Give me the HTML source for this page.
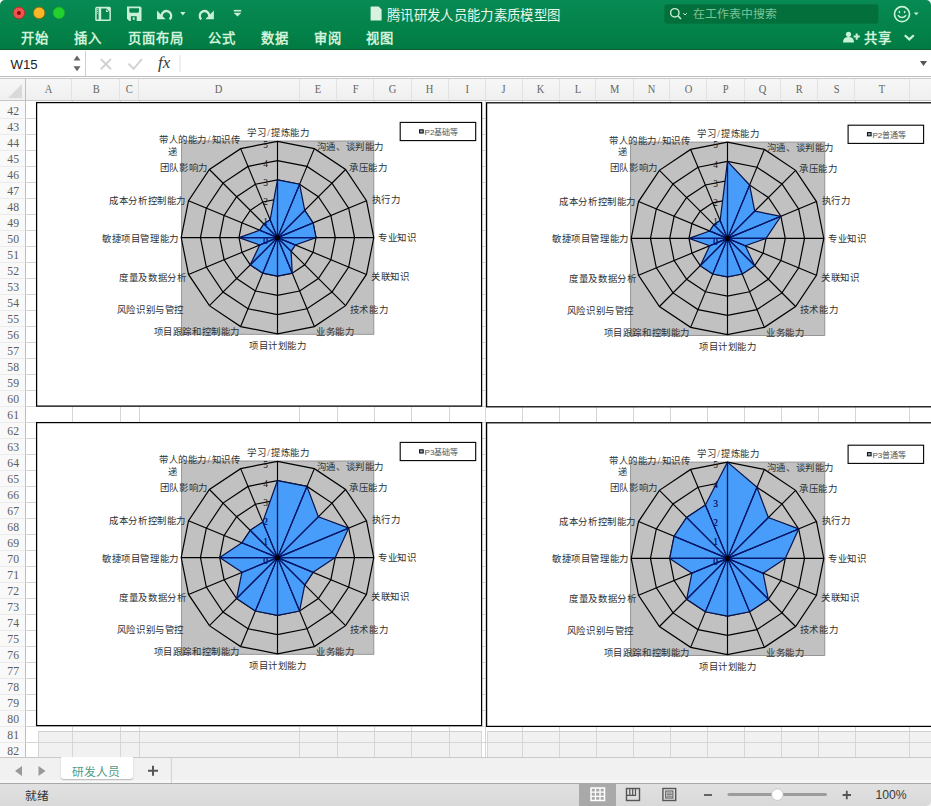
<!DOCTYPE html>
<html lang="zh-CN"><head><meta charset="utf-8"><style>
*{box-sizing:border-box}
body{margin:0;width:931px;height:806px;overflow:hidden;background:#fff;font-family:"Liberation Sans",sans-serif;position:relative}
.abs{position:absolute}
.tab{position:absolute;top:29.6px;color:#cff2da;font-size:13.3px;font-weight:bold;line-height:18px;letter-spacing:1px}
.ch{position:absolute;top:79px;height:21px;line-height:21px;text-align:center;font-family:"Liberation Serif",serif;font-size:12.8px;color:#666;border-right:1px solid #e2e2e2}
.ch span{display:inline-block;transform:scaleX(0.82)}
.rh{position:absolute;left:0;width:25px;height:16px;line-height:16px;text-align:right;padding-right:6px;font-family:"Liberation Serif",serif;font-size:13px;color:#5c5c5c;border-bottom:1px solid #ebebeb}
.rh span{display:inline-block;transform:scaleX(0.9);transform-origin:right}
</style></head><body>
<!-- ribbon -->
<div class="abs" style="left:0;top:0;width:931px;height:50px;background:linear-gradient(#088a54,#038249 60%,#017a42)"></div>
<div class="abs" style="left:0;top:48.5px;width:931px;height:1.5px;background:#0d5f33"></div>
<svg class="abs" style="left:0;top:0" width="931" height="50">
 <circle cx="18.9" cy="12.9" r="5.8" fill="#f0544f" stroke="#c02a26" stroke-width="0.9"/>
 <circle cx="18.9" cy="12.9" r="2" fill="#8a0a0a"/>
 <circle cx="39.1" cy="12.9" r="5.8" fill="#fbb726" stroke="#8f6a10" stroke-width="0.9"/>
 <circle cx="58.9" cy="12.9" r="5.8" fill="#22d12e" stroke="#19a924" stroke-width="0.6"/>
 <g fill="#c9f0d6">
  <rect x="95.2" y="6.8" width="15.7" height="14.2" rx="1.6"/>
  <path d="M96.7 8.3 h1.9 v11.2 h-1.9z" fill="#058550"/>
  <circle cx="97.6" cy="9.6" r="0.55"/><circle cx="97.6" cy="11.4" r="0.55"/><circle cx="97.6" cy="13.3" r="0.55"/>
  <path d="M101.2 8.6 h5.2 l3 3 v7.8 h-8.2z" fill="#058550"/>
  <path d="M106 9.2 l2.8 2.8 h-2.8z"/>
  <path d="M127 6.6 h12.8 a1.7 1.7 0 0 1 1.7 1.7 v12.7 h-12.3 l-2.2 -2.2z"/>
  <path d="M129.3 8.2 h9.7 v3 a1.5 1.5 0 0 1 -1.5 1.5 h-6.7 a1.5 1.5 0 0 1 -1.5 -1.5z" fill="#058550"/>
  <path d="M130.9 16.2 h5.8 v4.8 h-5.8z" fill="#058550"/>
  <path d="M132.8 17.4 h1.9 v2.4 h-1.9z"/>
  <path d="M157 10.4 v8.8 h8.6z"/>
  <path d="M213.9 10.4 v8.8 h-8.6z"/>
  <path d="M180.2 12 h5.3 l-2.65 3.5z"/>
  <rect x="233.8" y="9.9" width="7.4" height="1.6"/>
  <path d="M233.6 12.7 h7.8 l-3.9 3.9z"/>
 </g>
 <g fill="none" stroke="#c9f0d6" stroke-width="2.3">
  <path d="M161.6 16.2 A4.8 4.8 0 1 1 169.6 19.4"/>
  <path d="M209.3 16.2 A4.8 4.8 0 1 0 201.3 19.4"/>
 </g>
 <path d="M370.6 7.5 q0 -1 1 -1 h7 l3 3 v11 h-11z" fill="#d9f2e0"/>
 <rect x="664.3" y="4.2" width="214" height="19.6" rx="3" fill="#03703c"/>
 <circle cx="674.8" cy="12.8" r="4.2" fill="none" stroke="#c9ecd3" stroke-width="1.4"/>
 <line x1="677.8" y1="15.8" x2="681" y2="19" stroke="#c9ecd3" stroke-width="1.6"/>
 <path d="M683.2 13.2 l1.8 1.8 l1.8 -1.8" fill="none" stroke="#c9ecd3" stroke-width="1"/>
 <circle cx="902" cy="14.2" r="7.5" fill="none" stroke="#c8f2d6" stroke-width="1.7"/>
 <ellipse cx="899.4" cy="12" rx="0.8" ry="1.2" fill="#c8f2d6"/><ellipse cx="904.6" cy="12" rx="0.8" ry="1.2" fill="#c8f2d6"/>
 <path d="M897.8 15.2 q4.2 4.6 8.4 0" fill="none" stroke="#c8f2d6" stroke-width="1.4"/>
 <path d="M913.8 12.4 h4.8 l-2.4 2.8z" fill="#c8f2d6"/>
 <circle cx="848.5" cy="34.3" r="2.6" fill="#c8f2d6"/>
 <path d="M843 42.5 q0 -5.4 5.5 -5.4 q5.5 0 5.5 5.4z" fill="#c8f2d6"/>
 <path d="M853.6 36.6 h6.2 M856.7 33.5 v6.2" stroke="#c8f2d6" stroke-width="2"/>
 <path d="M904.8 35.2 l4.5 4.2 l4.5 -4.2" fill="none" stroke="#c8f2d6" stroke-width="2.2"/>
</svg>
<div class="abs" style="left:386.8px;top:6.3px;font-size:13.4px;letter-spacing:0.36px;color:#e6f6ea;line-height:19px">腾讯研发人员能力素质模型图</div>
<div class="abs" style="left:692.9px;top:5px;font-size:11.9px;color:#7cc398;line-height:19px">在工作表中搜索</div>
<div class="tab" style="left:21px">开始</div>
<div class="tab" style="left:74px">插入</div>
<div class="tab" style="left:127.5px">页面布局</div>
<div class="tab" style="left:208px">公式</div>
<div class="tab" style="left:260.5px">数据</div>
<div class="tab" style="left:314px">审阅</div>
<div class="tab" style="left:366px">视图</div>
<div class="tab" style="left:863.5px">共享</div>
<!-- formula bar -->
<div class="abs" style="left:0;top:50px;width:931px;height:26px;background:#fff"></div>
<div class="abs" style="left:10.5px;top:56.3px;font-size:13.2px;color:#222;line-height:18px">W15</div>
<svg class="abs" style="left:0;top:50px" width="931" height="28">
 <path d="M73.5 10.5 h7 l-3.5 -5z M73.5 16.3 h7 l-3.5 5z" fill="#666"/>
 <line x1="85.5" y1="1" x2="85.5" y2="26" stroke="#d0d0d0" stroke-width="1"/>
 <path d="M100.8 9 l10.2 10.2 M111 9 l-10.2 10.2" stroke="#d2d2d2" stroke-width="2"/>
 <path d="M128.4 13.6 l5.2 5.2 l8.3 -9.6" fill="none" stroke="#d2d2d2" stroke-width="2"/>
 <line x1="180" y1="5" x2="180" y2="22" stroke="#e0e0e0" stroke-width="1"/>
 <path d="M920 11 h7 l-3.5 5z" fill="#555"/>
</svg>
<div class="abs" style="left:158px;top:52.5px;font-family:'Liberation Serif',serif;font-style:italic;font-size:17px;color:#3a3a3a;line-height:20px">fx</div>
<div class="abs" style="left:0;top:76px;width:931px;height:1px;background:#bdbdbd"></div>
<div class="abs" style="left:0;top:78px;width:931px;height:1px;background:#c8c8c8"></div>
<!-- headers -->
<div class="abs" style="left:0;top:79px;width:931px;height:22px;background:linear-gradient(#f7f7f7,#efefef)"></div>
<div class="abs" style="left:0;top:100px;width:931px;height:1px;background:#c6c6c6"></div>
<div class="abs" style="left:0;top:101px;width:25.3px;height:656px;background:#f9f9f9"></div>
<div class="abs" style="left:25px;top:79px;width:1px;height:678px;background:#bfbfbf"></div>
<svg class="abs" style="left:0;top:79px" width="26" height="22"><path d="M8 19 L22 5 V19z" fill="#d9d9d9"/></svg>
<div class="ch" style="left:25.3px;width:47.2px"><span>A</span></div><div class="ch" style="left:72.5px;width:47.8px"><span>B</span></div><div class="ch" style="left:120.3px;width:19.2px"><span>C</span></div><div class="ch" style="left:139.5px;width:160.0px"><span>D</span></div><div class="ch" style="left:299.5px;width:37.8px"><span>E</span></div><div class="ch" style="left:337.3px;width:37.2px"><span>F</span></div><div class="ch" style="left:374.5px;width:37.1px"><span>G</span></div><div class="ch" style="left:411.6px;width:37.4px"><span>H</span></div><div class="ch" style="left:449.0px;width:36.5px"><span>I</span></div><div class="ch" style="left:485.5px;width:37.0px"><span>J</span></div><div class="ch" style="left:522.5px;width:37.1px"><span>K</span></div><div class="ch" style="left:559.6px;width:36.9px"><span>L</span></div><div class="ch" style="left:596.5px;width:37.1px"><span>M</span></div><div class="ch" style="left:633.6px;width:36.9px"><span>N</span></div><div class="ch" style="left:670.5px;width:36.9px"><span>O</span></div><div class="ch" style="left:707.4px;width:37.3px"><span>P</span></div><div class="ch" style="left:744.7px;width:36.7px"><span>Q</span></div><div class="ch" style="left:781.4px;width:37.0px"><span>R</span></div><div class="ch" style="left:818.4px;width:37.1px"><span>S</span></div><div class="ch" style="left:855.5px;width:54.1px"><span>T</span></div><div class="ch" style="left:909.6px;width:54.4px"><span>U</span></div>
<div class="rh" style="top:102.8px"><span>42</span></div><div class="rh" style="top:118.8px"><span>43</span></div><div class="rh" style="top:134.8px"><span>44</span></div><div class="rh" style="top:150.8px"><span>45</span></div><div class="rh" style="top:166.8px"><span>46</span></div><div class="rh" style="top:182.8px"><span>47</span></div><div class="rh" style="top:198.8px"><span>48</span></div><div class="rh" style="top:214.8px"><span>49</span></div><div class="rh" style="top:230.8px"><span>50</span></div><div class="rh" style="top:246.8px"><span>51</span></div><div class="rh" style="top:262.8px"><span>52</span></div><div class="rh" style="top:278.8px"><span>53</span></div><div class="rh" style="top:294.8px"><span>54</span></div><div class="rh" style="top:310.8px"><span>55</span></div><div class="rh" style="top:326.8px"><span>56</span></div><div class="rh" style="top:342.8px"><span>57</span></div><div class="rh" style="top:358.8px"><span>58</span></div><div class="rh" style="top:374.8px"><span>59</span></div><div class="rh" style="top:390.8px"><span>60</span></div><div class="rh" style="top:406.8px"><span>61</span></div><div class="rh" style="top:422.8px"><span>62</span></div><div class="rh" style="top:438.8px"><span>63</span></div><div class="rh" style="top:454.8px"><span>64</span></div><div class="rh" style="top:470.8px"><span>65</span></div><div class="rh" style="top:486.8px"><span>66</span></div><div class="rh" style="top:502.8px"><span>67</span></div><div class="rh" style="top:518.8px"><span>68</span></div><div class="rh" style="top:534.8px"><span>69</span></div><div class="rh" style="top:550.8px"><span>70</span></div><div class="rh" style="top:566.8px"><span>71</span></div><div class="rh" style="top:582.8px"><span>72</span></div><div class="rh" style="top:598.8px"><span>73</span></div><div class="rh" style="top:614.8px"><span>74</span></div><div class="rh" style="top:630.8px"><span>75</span></div><div class="rh" style="top:646.8px"><span>76</span></div><div class="rh" style="top:662.8px"><span>77</span></div><div class="rh" style="top:678.8px"><span>78</span></div><div class="rh" style="top:694.8px"><span>79</span></div><div class="rh" style="top:710.8px"><span>80</span></div><div class="rh" style="top:726.8px"><span>81</span></div><div class="rh" style="top:742.8px"><span>82</span></div>
<div class="abs" style="left:38px;top:731px;width:443.6px;height:27px;background:#f1f1f1;border-top:1px solid #cfcfcf;border-left:1px solid #d6d6d6;border-right:1px solid #d6d6d6"></div>
<div class="abs" style="left:487px;top:731px;width:444px;height:27px;background:#f1f1f1;border-top:1px solid #cfcfcf;border-left:1px solid #d6d6d6"></div>
<div style="position:absolute;left:72.0px;top:101px;width:1px;height:656px;background:#d6d6d6"></div><div style="position:absolute;left:119.8px;top:101px;width:1px;height:656px;background:#d6d6d6"></div><div style="position:absolute;left:139.0px;top:101px;width:1px;height:656px;background:#d6d6d6"></div><div style="position:absolute;left:299.0px;top:101px;width:1px;height:656px;background:#d6d6d6"></div><div style="position:absolute;left:336.8px;top:101px;width:1px;height:656px;background:#d6d6d6"></div><div style="position:absolute;left:374.0px;top:101px;width:1px;height:656px;background:#d6d6d6"></div><div style="position:absolute;left:411.1px;top:101px;width:1px;height:656px;background:#d6d6d6"></div><div style="position:absolute;left:448.5px;top:101px;width:1px;height:656px;background:#d6d6d6"></div><div style="position:absolute;left:485.0px;top:101px;width:1px;height:656px;background:#d6d6d6"></div><div style="position:absolute;left:522.0px;top:101px;width:1px;height:656px;background:#d6d6d6"></div><div style="position:absolute;left:559.1px;top:101px;width:1px;height:656px;background:#d6d6d6"></div><div style="position:absolute;left:596.0px;top:101px;width:1px;height:656px;background:#d6d6d6"></div><div style="position:absolute;left:633.1px;top:101px;width:1px;height:656px;background:#d6d6d6"></div><div style="position:absolute;left:670.0px;top:101px;width:1px;height:656px;background:#d6d6d6"></div><div style="position:absolute;left:706.9px;top:101px;width:1px;height:656px;background:#d6d6d6"></div><div style="position:absolute;left:744.2px;top:101px;width:1px;height:656px;background:#d6d6d6"></div><div style="position:absolute;left:780.9px;top:101px;width:1px;height:656px;background:#d6d6d6"></div><div style="position:absolute;left:817.9px;top:101px;width:1px;height:656px;background:#d6d6d6"></div><div style="position:absolute;left:855.0px;top:101px;width:1px;height:656px;background:#d6d6d6"></div><div style="position:absolute;left:909.1px;top:101px;width:1px;height:656px;background:#d6d6d6"></div><div style="position:absolute;left:25px;top:117.5px;width:906px;height:1px;background:#d6d6d6"></div><div style="position:absolute;left:25px;top:133.5px;width:906px;height:1px;background:#d6d6d6"></div><div style="position:absolute;left:25px;top:149.5px;width:906px;height:1px;background:#d6d6d6"></div><div style="position:absolute;left:25px;top:165.5px;width:906px;height:1px;background:#d6d6d6"></div><div style="position:absolute;left:25px;top:181.5px;width:906px;height:1px;background:#d6d6d6"></div><div style="position:absolute;left:25px;top:197.5px;width:906px;height:1px;background:#d6d6d6"></div><div style="position:absolute;left:25px;top:213.5px;width:906px;height:1px;background:#d6d6d6"></div><div style="position:absolute;left:25px;top:229.5px;width:906px;height:1px;background:#d6d6d6"></div><div style="position:absolute;left:25px;top:245.5px;width:906px;height:1px;background:#d6d6d6"></div><div style="position:absolute;left:25px;top:261.5px;width:906px;height:1px;background:#d6d6d6"></div><div style="position:absolute;left:25px;top:277.5px;width:906px;height:1px;background:#d6d6d6"></div><div style="position:absolute;left:25px;top:293.5px;width:906px;height:1px;background:#d6d6d6"></div><div style="position:absolute;left:25px;top:309.5px;width:906px;height:1px;background:#d6d6d6"></div><div style="position:absolute;left:25px;top:325.5px;width:906px;height:1px;background:#d6d6d6"></div><div style="position:absolute;left:25px;top:341.5px;width:906px;height:1px;background:#d6d6d6"></div><div style="position:absolute;left:25px;top:357.5px;width:906px;height:1px;background:#d6d6d6"></div><div style="position:absolute;left:25px;top:373.5px;width:906px;height:1px;background:#d6d6d6"></div><div style="position:absolute;left:25px;top:389.5px;width:906px;height:1px;background:#d6d6d6"></div><div style="position:absolute;left:25px;top:405.5px;width:906px;height:1px;background:#d6d6d6"></div><div style="position:absolute;left:25px;top:421.5px;width:906px;height:1px;background:#d6d6d6"></div><div style="position:absolute;left:25px;top:437.5px;width:906px;height:1px;background:#d6d6d6"></div><div style="position:absolute;left:25px;top:453.5px;width:906px;height:1px;background:#d6d6d6"></div><div style="position:absolute;left:25px;top:469.5px;width:906px;height:1px;background:#d6d6d6"></div><div style="position:absolute;left:25px;top:485.5px;width:906px;height:1px;background:#d6d6d6"></div><div style="position:absolute;left:25px;top:501.5px;width:906px;height:1px;background:#d6d6d6"></div><div style="position:absolute;left:25px;top:517.5px;width:906px;height:1px;background:#d6d6d6"></div><div style="position:absolute;left:25px;top:533.5px;width:906px;height:1px;background:#d6d6d6"></div><div style="position:absolute;left:25px;top:549.5px;width:906px;height:1px;background:#d6d6d6"></div><div style="position:absolute;left:25px;top:565.5px;width:906px;height:1px;background:#d6d6d6"></div><div style="position:absolute;left:25px;top:581.5px;width:906px;height:1px;background:#d6d6d6"></div><div style="position:absolute;left:25px;top:597.5px;width:906px;height:1px;background:#d6d6d6"></div><div style="position:absolute;left:25px;top:613.5px;width:906px;height:1px;background:#d6d6d6"></div><div style="position:absolute;left:25px;top:629.5px;width:906px;height:1px;background:#d6d6d6"></div><div style="position:absolute;left:25px;top:645.5px;width:906px;height:1px;background:#d6d6d6"></div><div style="position:absolute;left:25px;top:661.5px;width:906px;height:1px;background:#d6d6d6"></div><div style="position:absolute;left:25px;top:677.5px;width:906px;height:1px;background:#d6d6d6"></div><div style="position:absolute;left:25px;top:693.5px;width:906px;height:1px;background:#d6d6d6"></div><div style="position:absolute;left:25px;top:709.5px;width:906px;height:1px;background:#d6d6d6"></div><div style="position:absolute;left:25px;top:725.5px;width:906px;height:1px;background:#d6d6d6"></div><div style="position:absolute;left:25px;top:741.5px;width:906px;height:1px;background:#d6d6d6"></div><div style="position:absolute;left:25px;top:757.5px;width:906px;height:1px;background:#d6d6d6"></div>
<svg class="abs" style="left:0;top:0" width="931" height="757">
<rect x="36.6" y="102.6" width="445" height="303.5" fill="#fff" stroke="#000" stroke-width="1.25"/><rect x="486.6" y="102.8" width="460" height="304" fill="#fff" stroke="#000" stroke-width="1.25"/><rect x="36.6" y="422.6" width="445" height="303" fill="#fff" stroke="#000" stroke-width="1.25"/><rect x="486.6" y="422.8" width="460" height="303.6" fill="#fff" stroke="#000" stroke-width="1.25"/><rect x="181.60" y="141.00" width="192.20" height="193.30" fill="#c1c1c1" stroke="#8e8e8e" stroke-width="0.9"/>
<polygon points="277.50,218.34 284.87,219.81 291.12,223.98 295.29,230.23 296.76,237.60 295.29,244.97 291.12,251.22 284.87,255.39 277.50,256.86 270.13,255.39 263.88,251.22 259.71,244.97 258.24,237.60 259.71,230.23 263.88,223.98 270.13,219.81" fill="none" stroke="#000" stroke-width="1.2"/>
<polygon points="277.50,199.08 292.24,202.01 304.74,210.36 313.09,222.86 316.02,237.60 313.09,252.34 304.74,264.84 292.24,273.19 277.50,276.12 262.76,273.19 250.26,264.84 241.91,252.34 238.98,237.60 241.91,222.86 250.26,210.36 262.76,202.01" fill="none" stroke="#000" stroke-width="1.2"/>
<polygon points="277.50,179.82 299.61,184.22 318.36,196.74 330.88,215.49 335.28,237.60 330.88,259.71 318.36,278.46 299.61,290.98 277.50,295.38 255.39,290.98 236.64,278.46 224.12,259.71 219.72,237.60 224.12,215.49 236.64,196.74 255.39,184.22" fill="none" stroke="#000" stroke-width="1.2"/>
<polygon points="277.50,160.56 306.98,166.42 331.98,183.12 348.68,208.12 354.54,237.60 348.68,267.08 331.98,292.08 306.98,308.78 277.50,314.64 248.02,308.78 223.02,292.08 206.32,267.08 200.46,237.60 206.32,208.12 223.02,183.12 248.02,166.42" fill="none" stroke="#000" stroke-width="1.2"/>
<polygon points="277.50,141.30 314.35,148.63 345.59,169.51 366.47,200.75 373.80,237.60 366.47,274.45 345.59,305.69 314.35,326.57 277.50,333.90 240.65,326.57 209.41,305.69 188.53,274.45 181.20,237.60 188.53,200.75 209.41,169.51 240.65,148.63" fill="none" stroke="#000" stroke-width="1.2"/>
<clipPath id="cp277_237"><polygon points="277.50,179.82 299.61,184.22 304.74,210.36 313.09,222.86 316.02,237.60 295.29,244.97 291.12,251.22 292.24,273.19 277.50,276.12 262.76,273.19 250.26,264.84 259.71,244.97 238.98,237.60 259.71,230.23 263.88,223.98 270.13,219.81"/></clipPath>
<polygon points="277.50,179.82 299.61,184.22 304.74,210.36 313.09,222.86 316.02,237.60 295.29,244.97 291.12,251.22 292.24,273.19 277.50,276.12 262.76,273.19 250.26,264.84 259.71,244.97 238.98,237.60 259.71,230.23 263.88,223.98 270.13,219.81" fill="#489dfb"/>
<g stroke="#000" stroke-width="1.15"><line x1="277.50" y1="237.60" x2="277.50" y2="141.30"/><line x1="277.50" y1="237.60" x2="314.35" y2="148.63"/><line x1="277.50" y1="237.60" x2="345.59" y2="169.51"/><line x1="277.50" y1="237.60" x2="366.47" y2="200.75"/><line x1="277.50" y1="237.60" x2="373.80" y2="237.60"/><line x1="277.50" y1="237.60" x2="366.47" y2="274.45"/><line x1="277.50" y1="237.60" x2="345.59" y2="305.69"/><line x1="277.50" y1="237.60" x2="314.35" y2="326.57"/><line x1="277.50" y1="237.60" x2="277.50" y2="333.90"/><line x1="277.50" y1="237.60" x2="240.65" y2="326.57"/><line x1="277.50" y1="237.60" x2="209.41" y2="305.69"/><line x1="277.50" y1="237.60" x2="188.53" y2="274.45"/><line x1="277.50" y1="237.60" x2="181.20" y2="237.60"/><line x1="277.50" y1="237.60" x2="188.53" y2="200.75"/><line x1="277.50" y1="237.60" x2="209.41" y2="169.51"/><line x1="277.50" y1="237.60" x2="240.65" y2="148.63"/></g>
<g font-size="9.4" fill="#111" text-anchor="middle" font-family="Liberation Serif"><text x="265.50" y="243.80">0</text><text x="265.50" y="224.54">1</text><text x="265.50" y="205.28">2</text><text x="265.50" y="186.02">3</text><text x="265.50" y="166.76">4</text><text x="265.50" y="147.50">5</text></g>
<g clip-path="url(#cp277_237)"><g stroke="#06177a" stroke-width="1.15"><line x1="277.50" y1="237.60" x2="277.50" y2="141.30"/><line x1="277.50" y1="237.60" x2="314.35" y2="148.63"/><line x1="277.50" y1="237.60" x2="345.59" y2="169.51"/><line x1="277.50" y1="237.60" x2="366.47" y2="200.75"/><line x1="277.50" y1="237.60" x2="373.80" y2="237.60"/><line x1="277.50" y1="237.60" x2="366.47" y2="274.45"/><line x1="277.50" y1="237.60" x2="345.59" y2="305.69"/><line x1="277.50" y1="237.60" x2="314.35" y2="326.57"/><line x1="277.50" y1="237.60" x2="277.50" y2="333.90"/><line x1="277.50" y1="237.60" x2="240.65" y2="326.57"/><line x1="277.50" y1="237.60" x2="209.41" y2="305.69"/><line x1="277.50" y1="237.60" x2="188.53" y2="274.45"/><line x1="277.50" y1="237.60" x2="181.20" y2="237.60"/><line x1="277.50" y1="237.60" x2="188.53" y2="200.75"/><line x1="277.50" y1="237.60" x2="209.41" y2="169.51"/><line x1="277.50" y1="237.60" x2="240.65" y2="148.63"/></g><g font-size="9.4" fill="#0a1f8a" text-anchor="middle" font-family="Liberation Serif"><text x="265.50" y="243.80">0</text><text x="265.50" y="224.54">1</text><text x="265.50" y="205.28">2</text><text x="265.50" y="186.02">3</text><text x="265.50" y="166.76">4</text><text x="265.50" y="147.50">5</text></g></g>
<polygon points="277.50,179.82 299.61,184.22 304.74,210.36 313.09,222.86 316.02,237.60 295.29,244.97 291.12,251.22 292.24,273.19 277.50,276.12 262.76,273.19 250.26,264.84 259.71,244.97 238.98,237.60 259.71,230.23 263.88,223.98 270.13,219.81" fill="none" stroke="#08124a" stroke-width="1.2" stroke-linejoin="round"/>
<circle cx="277.50" cy="237.60" r="2.6" fill="#000"/><g font-size="9.4" letter-spacing="0.6" fill="#303030" font-family="Liberation Serif"><text x="247.30" y="135.80">学习<tspan dx="0.7">/</tspan><tspan dx="0.7">提炼能力</tspan></text>
<text x="316.80" y="149.80">沟通、谈判能力</text>
<text x="349.20" y="171.00">承压能力</text>
<text x="371.90" y="203.45">执行力</text>
<text x="378.00" y="241.35">专业知识</text>
<text x="371.20" y="280.40">关联知识</text>
<text x="349.80" y="312.50">技术能力</text>
<text x="316.00" y="334.70">业务能力</text>
<text x="249.00" y="348.75">项目计划能力</text>
<text x="153.60" y="334.75">项目跟踪和控制能力</text>
<text x="116.80" y="312.95">风险识别与管控</text>
<text x="119.20" y="280.70">度量及数据分析</text>
<text x="102.00" y="241.50">敏捷项目管理能力</text>
<text x="109.20" y="203.95">成本分析控制能力</text>
<text x="159.80" y="170.60">团队影响力</text>
<text x="159.10" y="142.80">带人的能力<tspan dx="0.7">/</tspan><tspan dx="0.7">知识传</tspan></text>
<text x="168.30" y="154.60">递</text></g><rect x="400.2" y="122.4" width="75.5" height="18.2" fill="#fff" stroke="#000" stroke-width="1.1"/><rect x="419.59999999999997" y="129.8" width="3.6" height="3.2" fill="#8fa4c8" stroke="#111" stroke-width="1.1"/><text x="424.5" y="135.0" font-size="8.1" fill="#555" font-family="Liberation Sans">P2基础等</text><rect x="630.60" y="142.10" width="194.20" height="193.40" fill="#c1c1c1" stroke="#8e8e8e" stroke-width="0.9"/>
<polygon points="727.50,219.14 734.87,220.61 741.12,224.78 745.29,231.03 746.76,238.40 745.29,245.77 741.12,252.02 734.87,256.19 727.50,257.66 720.13,256.19 713.88,252.02 709.71,245.77 708.24,238.40 709.71,231.03 713.88,224.78 720.13,220.61" fill="none" stroke="#000" stroke-width="1.2"/>
<polygon points="727.50,199.88 742.24,202.81 754.74,211.16 763.09,223.66 766.02,238.40 763.09,253.14 754.74,265.64 742.24,273.99 727.50,276.92 712.76,273.99 700.26,265.64 691.91,253.14 688.98,238.40 691.91,223.66 700.26,211.16 712.76,202.81" fill="none" stroke="#000" stroke-width="1.2"/>
<polygon points="727.50,180.62 749.61,185.02 768.36,197.54 780.88,216.29 785.28,238.40 780.88,260.51 768.36,279.26 749.61,291.78 727.50,296.18 705.39,291.78 686.64,279.26 674.12,260.51 669.72,238.40 674.12,216.29 686.64,197.54 705.39,185.02" fill="none" stroke="#000" stroke-width="1.2"/>
<polygon points="727.50,161.36 756.98,167.22 781.98,183.92 798.68,208.92 804.54,238.40 798.68,267.88 781.98,292.88 756.98,309.58 727.50,315.44 698.02,309.58 673.02,292.88 656.32,267.88 650.46,238.40 656.32,208.92 673.02,183.92 698.02,167.22" fill="none" stroke="#000" stroke-width="1.2"/>
<polygon points="727.50,142.10 764.35,149.43 795.59,170.31 816.47,201.55 823.80,238.40 816.47,275.25 795.59,306.49 764.35,327.37 727.50,334.70 690.65,327.37 659.41,306.49 638.53,275.25 631.20,238.40 638.53,201.55 659.41,170.31 690.65,149.43" fill="none" stroke="#000" stroke-width="1.2"/>
<clipPath id="cp727_238"><polygon points="727.50,161.36 749.61,185.02 754.74,211.16 780.88,216.29 766.02,238.40 745.29,245.77 754.74,265.64 742.24,273.99 727.50,276.92 712.76,273.99 700.26,265.64 709.71,245.77 688.98,238.40 709.71,231.03 713.88,224.78 720.13,220.61"/></clipPath>
<polygon points="727.50,161.36 749.61,185.02 754.74,211.16 780.88,216.29 766.02,238.40 745.29,245.77 754.74,265.64 742.24,273.99 727.50,276.92 712.76,273.99 700.26,265.64 709.71,245.77 688.98,238.40 709.71,231.03 713.88,224.78 720.13,220.61" fill="#489dfb"/>
<g stroke="#000" stroke-width="1.15"><line x1="727.50" y1="238.40" x2="727.50" y2="142.10"/><line x1="727.50" y1="238.40" x2="764.35" y2="149.43"/><line x1="727.50" y1="238.40" x2="795.59" y2="170.31"/><line x1="727.50" y1="238.40" x2="816.47" y2="201.55"/><line x1="727.50" y1="238.40" x2="823.80" y2="238.40"/><line x1="727.50" y1="238.40" x2="816.47" y2="275.25"/><line x1="727.50" y1="238.40" x2="795.59" y2="306.49"/><line x1="727.50" y1="238.40" x2="764.35" y2="327.37"/><line x1="727.50" y1="238.40" x2="727.50" y2="334.70"/><line x1="727.50" y1="238.40" x2="690.65" y2="327.37"/><line x1="727.50" y1="238.40" x2="659.41" y2="306.49"/><line x1="727.50" y1="238.40" x2="638.53" y2="275.25"/><line x1="727.50" y1="238.40" x2="631.20" y2="238.40"/><line x1="727.50" y1="238.40" x2="638.53" y2="201.55"/><line x1="727.50" y1="238.40" x2="659.41" y2="170.31"/><line x1="727.50" y1="238.40" x2="690.65" y2="149.43"/></g>
<g font-size="9.4" fill="#111" text-anchor="middle" font-family="Liberation Serif"><text x="715.50" y="244.60">0</text><text x="715.50" y="225.34">1</text><text x="715.50" y="206.08">2</text><text x="715.50" y="186.82">3</text><text x="715.50" y="167.56">4</text><text x="715.50" y="148.30">5</text></g>
<g clip-path="url(#cp727_238)"><g stroke="#06177a" stroke-width="1.15"><line x1="727.50" y1="238.40" x2="727.50" y2="142.10"/><line x1="727.50" y1="238.40" x2="764.35" y2="149.43"/><line x1="727.50" y1="238.40" x2="795.59" y2="170.31"/><line x1="727.50" y1="238.40" x2="816.47" y2="201.55"/><line x1="727.50" y1="238.40" x2="823.80" y2="238.40"/><line x1="727.50" y1="238.40" x2="816.47" y2="275.25"/><line x1="727.50" y1="238.40" x2="795.59" y2="306.49"/><line x1="727.50" y1="238.40" x2="764.35" y2="327.37"/><line x1="727.50" y1="238.40" x2="727.50" y2="334.70"/><line x1="727.50" y1="238.40" x2="690.65" y2="327.37"/><line x1="727.50" y1="238.40" x2="659.41" y2="306.49"/><line x1="727.50" y1="238.40" x2="638.53" y2="275.25"/><line x1="727.50" y1="238.40" x2="631.20" y2="238.40"/><line x1="727.50" y1="238.40" x2="638.53" y2="201.55"/><line x1="727.50" y1="238.40" x2="659.41" y2="170.31"/><line x1="727.50" y1="238.40" x2="690.65" y2="149.43"/></g><g font-size="9.4" fill="#0a1f8a" text-anchor="middle" font-family="Liberation Serif"><text x="715.50" y="244.60">0</text><text x="715.50" y="225.34">1</text><text x="715.50" y="206.08">2</text><text x="715.50" y="186.82">3</text><text x="715.50" y="167.56">4</text><text x="715.50" y="148.30">5</text></g></g>
<polygon points="727.50,161.36 749.61,185.02 754.74,211.16 780.88,216.29 766.02,238.40 745.29,245.77 754.74,265.64 742.24,273.99 727.50,276.92 712.76,273.99 700.26,265.64 709.71,245.77 688.98,238.40 709.71,231.03 713.88,224.78 720.13,220.61" fill="none" stroke="#08124a" stroke-width="1.2" stroke-linejoin="round"/>
<circle cx="727.50" cy="238.40" r="2.6" fill="#000"/><g font-size="9.4" letter-spacing="0.6" fill="#303030" font-family="Liberation Serif"><text x="697.30" y="136.60">学习<tspan dx="0.7">/</tspan><tspan dx="0.7">提炼能力</tspan></text>
<text x="766.80" y="150.60">沟通、谈判能力</text>
<text x="799.20" y="171.80">承压能力</text>
<text x="821.90" y="204.25">执行力</text>
<text x="828.00" y="242.15">专业知识</text>
<text x="821.20" y="281.20">关联知识</text>
<text x="799.80" y="313.30">技术能力</text>
<text x="766.00" y="335.50">业务能力</text>
<text x="699.00" y="349.55">项目计划能力</text>
<text x="603.60" y="335.55">项目跟踪和控制能力</text>
<text x="566.80" y="313.75">风险识别与管控</text>
<text x="569.20" y="281.50">度量及数据分析</text>
<text x="552.00" y="242.30">敏捷项目管理能力</text>
<text x="559.20" y="204.75">成本分析控制能力</text>
<text x="609.80" y="171.40">团队影响力</text>
<text x="609.10" y="143.60">带人的能力<tspan dx="0.7">/</tspan><tspan dx="0.7">知识传</tspan></text>
<text x="618.30" y="155.40">递</text></g><rect x="848.1" y="125.2" width="75.5" height="18.2" fill="#fff" stroke="#000" stroke-width="1.1"/><rect x="867.5" y="132.6" width="3.6" height="3.2" fill="#8fa4c8" stroke="#111" stroke-width="1.1"/><text x="872.4" y="137.8" font-size="8.1" fill="#555" font-family="Liberation Sans">P2普通等</text><rect x="181.60" y="461.00" width="192.20" height="193.30" fill="#c1c1c1" stroke="#8e8e8e" stroke-width="0.9"/>
<polygon points="277.50,538.34 284.87,539.81 291.12,543.98 295.29,550.23 296.76,557.60 295.29,564.97 291.12,571.22 284.87,575.39 277.50,576.86 270.13,575.39 263.88,571.22 259.71,564.97 258.24,557.60 259.71,550.23 263.88,543.98 270.13,539.81" fill="none" stroke="#000" stroke-width="1.2"/>
<polygon points="277.50,519.08 292.24,522.01 304.74,530.36 313.09,542.86 316.02,557.60 313.09,572.34 304.74,584.84 292.24,593.19 277.50,596.12 262.76,593.19 250.26,584.84 241.91,572.34 238.98,557.60 241.91,542.86 250.26,530.36 262.76,522.01" fill="none" stroke="#000" stroke-width="1.2"/>
<polygon points="277.50,499.82 299.61,504.22 318.36,516.74 330.88,535.49 335.28,557.60 330.88,579.71 318.36,598.46 299.61,610.98 277.50,615.38 255.39,610.98 236.64,598.46 224.12,579.71 219.72,557.60 224.12,535.49 236.64,516.74 255.39,504.22" fill="none" stroke="#000" stroke-width="1.2"/>
<polygon points="277.50,480.56 306.98,486.42 331.98,503.12 348.68,528.12 354.54,557.60 348.68,587.08 331.98,612.08 306.98,628.78 277.50,634.64 248.02,628.78 223.02,612.08 206.32,587.08 200.46,557.60 206.32,528.12 223.02,503.12 248.02,486.42" fill="none" stroke="#000" stroke-width="1.2"/>
<polygon points="277.50,461.30 314.35,468.63 345.59,489.51 366.47,520.75 373.80,557.60 366.47,594.45 345.59,625.69 314.35,646.57 277.50,653.90 240.65,646.57 209.41,625.69 188.53,594.45 181.20,557.60 188.53,520.75 209.41,489.51 240.65,468.63" fill="none" stroke="#000" stroke-width="1.2"/>
<clipPath id="cp277_557"><polygon points="277.50,480.56 306.98,486.42 318.36,516.74 348.68,528.12 335.28,557.60 313.09,572.34 304.74,584.84 299.61,610.98 277.50,615.38 255.39,610.98 236.64,598.46 241.91,572.34 219.72,557.60 241.91,542.86 250.26,530.36 262.76,522.01"/></clipPath>
<polygon points="277.50,480.56 306.98,486.42 318.36,516.74 348.68,528.12 335.28,557.60 313.09,572.34 304.74,584.84 299.61,610.98 277.50,615.38 255.39,610.98 236.64,598.46 241.91,572.34 219.72,557.60 241.91,542.86 250.26,530.36 262.76,522.01" fill="#489dfb"/>
<g stroke="#000" stroke-width="1.15"><line x1="277.50" y1="557.60" x2="277.50" y2="461.30"/><line x1="277.50" y1="557.60" x2="314.35" y2="468.63"/><line x1="277.50" y1="557.60" x2="345.59" y2="489.51"/><line x1="277.50" y1="557.60" x2="366.47" y2="520.75"/><line x1="277.50" y1="557.60" x2="373.80" y2="557.60"/><line x1="277.50" y1="557.60" x2="366.47" y2="594.45"/><line x1="277.50" y1="557.60" x2="345.59" y2="625.69"/><line x1="277.50" y1="557.60" x2="314.35" y2="646.57"/><line x1="277.50" y1="557.60" x2="277.50" y2="653.90"/><line x1="277.50" y1="557.60" x2="240.65" y2="646.57"/><line x1="277.50" y1="557.60" x2="209.41" y2="625.69"/><line x1="277.50" y1="557.60" x2="188.53" y2="594.45"/><line x1="277.50" y1="557.60" x2="181.20" y2="557.60"/><line x1="277.50" y1="557.60" x2="188.53" y2="520.75"/><line x1="277.50" y1="557.60" x2="209.41" y2="489.51"/><line x1="277.50" y1="557.60" x2="240.65" y2="468.63"/></g>
<g font-size="9.4" fill="#111" text-anchor="middle" font-family="Liberation Serif"><text x="265.50" y="563.80">0</text><text x="265.50" y="544.54">1</text><text x="265.50" y="525.28">2</text><text x="265.50" y="506.02">3</text><text x="265.50" y="486.76">4</text><text x="265.50" y="467.50">5</text></g>
<g clip-path="url(#cp277_557)"><g stroke="#06177a" stroke-width="1.15"><line x1="277.50" y1="557.60" x2="277.50" y2="461.30"/><line x1="277.50" y1="557.60" x2="314.35" y2="468.63"/><line x1="277.50" y1="557.60" x2="345.59" y2="489.51"/><line x1="277.50" y1="557.60" x2="366.47" y2="520.75"/><line x1="277.50" y1="557.60" x2="373.80" y2="557.60"/><line x1="277.50" y1="557.60" x2="366.47" y2="594.45"/><line x1="277.50" y1="557.60" x2="345.59" y2="625.69"/><line x1="277.50" y1="557.60" x2="314.35" y2="646.57"/><line x1="277.50" y1="557.60" x2="277.50" y2="653.90"/><line x1="277.50" y1="557.60" x2="240.65" y2="646.57"/><line x1="277.50" y1="557.60" x2="209.41" y2="625.69"/><line x1="277.50" y1="557.60" x2="188.53" y2="594.45"/><line x1="277.50" y1="557.60" x2="181.20" y2="557.60"/><line x1="277.50" y1="557.60" x2="188.53" y2="520.75"/><line x1="277.50" y1="557.60" x2="209.41" y2="489.51"/><line x1="277.50" y1="557.60" x2="240.65" y2="468.63"/></g><g font-size="9.4" fill="#0a1f8a" text-anchor="middle" font-family="Liberation Serif"><text x="265.50" y="563.80">0</text><text x="265.50" y="544.54">1</text><text x="265.50" y="525.28">2</text><text x="265.50" y="506.02">3</text><text x="265.50" y="486.76">4</text><text x="265.50" y="467.50">5</text></g></g>
<polygon points="277.50,480.56 306.98,486.42 318.36,516.74 348.68,528.12 335.28,557.60 313.09,572.34 304.74,584.84 299.61,610.98 277.50,615.38 255.39,610.98 236.64,598.46 241.91,572.34 219.72,557.60 241.91,542.86 250.26,530.36 262.76,522.01" fill="none" stroke="#08124a" stroke-width="1.2" stroke-linejoin="round"/>
<circle cx="277.50" cy="557.60" r="2.6" fill="#000"/><g font-size="9.4" letter-spacing="0.6" fill="#303030" font-family="Liberation Serif"><text x="247.30" y="455.80">学习<tspan dx="0.7">/</tspan><tspan dx="0.7">提炼能力</tspan></text>
<text x="316.80" y="469.80">沟通、谈判能力</text>
<text x="349.20" y="491.00">承压能力</text>
<text x="371.90" y="523.45">执行力</text>
<text x="378.00" y="561.35">专业知识</text>
<text x="371.20" y="600.40">关联知识</text>
<text x="349.80" y="632.50">技术能力</text>
<text x="316.00" y="654.70">业务能力</text>
<text x="249.00" y="668.75">项目计划能力</text>
<text x="153.60" y="654.75">项目跟踪和控制能力</text>
<text x="116.80" y="632.95">风险识别与管控</text>
<text x="119.20" y="600.70">度量及数据分析</text>
<text x="102.00" y="561.50">敏捷项目管理能力</text>
<text x="109.20" y="523.95">成本分析控制能力</text>
<text x="159.80" y="490.60">团队影响力</text>
<text x="159.10" y="462.80">带人的能力<tspan dx="0.7">/</tspan><tspan dx="0.7">知识传</tspan></text>
<text x="168.30" y="474.60">递</text></g><rect x="400.2" y="442.4" width="75.5" height="18.2" fill="#fff" stroke="#000" stroke-width="1.1"/><rect x="419.59999999999997" y="449.79999999999995" width="3.6" height="3.2" fill="#8fa4c8" stroke="#111" stroke-width="1.1"/><text x="424.5" y="455.0" font-size="8.1" fill="#555" font-family="Liberation Sans">P3基础等</text><rect x="630.60" y="462.10" width="194.20" height="193.40" fill="#c1c1c1" stroke="#8e8e8e" stroke-width="0.9"/>
<polygon points="727.50,539.14 734.87,540.61 741.12,544.78 745.29,551.03 746.76,558.40 745.29,565.77 741.12,572.02 734.87,576.19 727.50,577.66 720.13,576.19 713.88,572.02 709.71,565.77 708.24,558.40 709.71,551.03 713.88,544.78 720.13,540.61" fill="none" stroke="#000" stroke-width="1.2"/>
<polygon points="727.50,519.88 742.24,522.81 754.74,531.16 763.09,543.66 766.02,558.40 763.09,573.14 754.74,585.64 742.24,593.99 727.50,596.92 712.76,593.99 700.26,585.64 691.91,573.14 688.98,558.40 691.91,543.66 700.26,531.16 712.76,522.81" fill="none" stroke="#000" stroke-width="1.2"/>
<polygon points="727.50,500.62 749.61,505.02 768.36,517.54 780.88,536.29 785.28,558.40 780.88,580.51 768.36,599.26 749.61,611.78 727.50,616.18 705.39,611.78 686.64,599.26 674.12,580.51 669.72,558.40 674.12,536.29 686.64,517.54 705.39,505.02" fill="none" stroke="#000" stroke-width="1.2"/>
<polygon points="727.50,481.36 756.98,487.22 781.98,503.92 798.68,528.92 804.54,558.40 798.68,587.88 781.98,612.88 756.98,629.58 727.50,635.44 698.02,629.58 673.02,612.88 656.32,587.88 650.46,558.40 656.32,528.92 673.02,503.92 698.02,487.22" fill="none" stroke="#000" stroke-width="1.2"/>
<polygon points="727.50,462.10 764.35,469.43 795.59,490.31 816.47,521.55 823.80,558.40 816.47,595.25 795.59,626.49 764.35,647.37 727.50,654.70 690.65,647.37 659.41,626.49 638.53,595.25 631.20,558.40 638.53,521.55 659.41,490.31 690.65,469.43" fill="none" stroke="#000" stroke-width="1.2"/>
<clipPath id="cp727_558"><polygon points="727.50,462.10 756.98,487.22 768.36,517.54 798.68,528.92 785.28,558.40 763.09,573.14 768.36,599.26 749.61,611.78 727.50,616.18 705.39,611.78 686.64,599.26 691.91,573.14 669.72,558.40 674.12,536.29 686.64,517.54 705.39,505.02"/></clipPath>
<polygon points="727.50,462.10 756.98,487.22 768.36,517.54 798.68,528.92 785.28,558.40 763.09,573.14 768.36,599.26 749.61,611.78 727.50,616.18 705.39,611.78 686.64,599.26 691.91,573.14 669.72,558.40 674.12,536.29 686.64,517.54 705.39,505.02" fill="#489dfb"/>
<g stroke="#000" stroke-width="1.15"><line x1="727.50" y1="558.40" x2="727.50" y2="462.10"/><line x1="727.50" y1="558.40" x2="764.35" y2="469.43"/><line x1="727.50" y1="558.40" x2="795.59" y2="490.31"/><line x1="727.50" y1="558.40" x2="816.47" y2="521.55"/><line x1="727.50" y1="558.40" x2="823.80" y2="558.40"/><line x1="727.50" y1="558.40" x2="816.47" y2="595.25"/><line x1="727.50" y1="558.40" x2="795.59" y2="626.49"/><line x1="727.50" y1="558.40" x2="764.35" y2="647.37"/><line x1="727.50" y1="558.40" x2="727.50" y2="654.70"/><line x1="727.50" y1="558.40" x2="690.65" y2="647.37"/><line x1="727.50" y1="558.40" x2="659.41" y2="626.49"/><line x1="727.50" y1="558.40" x2="638.53" y2="595.25"/><line x1="727.50" y1="558.40" x2="631.20" y2="558.40"/><line x1="727.50" y1="558.40" x2="638.53" y2="521.55"/><line x1="727.50" y1="558.40" x2="659.41" y2="490.31"/><line x1="727.50" y1="558.40" x2="690.65" y2="469.43"/></g>
<g font-size="9.4" fill="#111" text-anchor="middle" font-family="Liberation Serif"><text x="715.50" y="564.60">0</text><text x="715.50" y="545.34">1</text><text x="715.50" y="526.08">2</text><text x="715.50" y="506.82">3</text><text x="715.50" y="487.56">4</text><text x="715.50" y="468.30">5</text></g>
<g clip-path="url(#cp727_558)"><g stroke="#06177a" stroke-width="1.15"><line x1="727.50" y1="558.40" x2="727.50" y2="462.10"/><line x1="727.50" y1="558.40" x2="764.35" y2="469.43"/><line x1="727.50" y1="558.40" x2="795.59" y2="490.31"/><line x1="727.50" y1="558.40" x2="816.47" y2="521.55"/><line x1="727.50" y1="558.40" x2="823.80" y2="558.40"/><line x1="727.50" y1="558.40" x2="816.47" y2="595.25"/><line x1="727.50" y1="558.40" x2="795.59" y2="626.49"/><line x1="727.50" y1="558.40" x2="764.35" y2="647.37"/><line x1="727.50" y1="558.40" x2="727.50" y2="654.70"/><line x1="727.50" y1="558.40" x2="690.65" y2="647.37"/><line x1="727.50" y1="558.40" x2="659.41" y2="626.49"/><line x1="727.50" y1="558.40" x2="638.53" y2="595.25"/><line x1="727.50" y1="558.40" x2="631.20" y2="558.40"/><line x1="727.50" y1="558.40" x2="638.53" y2="521.55"/><line x1="727.50" y1="558.40" x2="659.41" y2="490.31"/><line x1="727.50" y1="558.40" x2="690.65" y2="469.43"/></g><g font-size="9.4" fill="#0a1f8a" text-anchor="middle" font-family="Liberation Serif"><text x="715.50" y="564.60">0</text><text x="715.50" y="545.34">1</text><text x="715.50" y="526.08">2</text><text x="715.50" y="506.82">3</text><text x="715.50" y="487.56">4</text><text x="715.50" y="468.30">5</text></g></g>
<polygon points="727.50,462.10 756.98,487.22 768.36,517.54 798.68,528.92 785.28,558.40 763.09,573.14 768.36,599.26 749.61,611.78 727.50,616.18 705.39,611.78 686.64,599.26 691.91,573.14 669.72,558.40 674.12,536.29 686.64,517.54 705.39,505.02" fill="none" stroke="#08124a" stroke-width="1.2" stroke-linejoin="round"/>
<circle cx="727.50" cy="558.40" r="2.6" fill="#000"/><g font-size="9.4" letter-spacing="0.6" fill="#303030" font-family="Liberation Serif"><text x="697.30" y="456.60">学习<tspan dx="0.7">/</tspan><tspan dx="0.7">提炼能力</tspan></text>
<text x="766.80" y="470.60">沟通、谈判能力</text>
<text x="799.20" y="491.80">承压能力</text>
<text x="821.90" y="524.25">执行力</text>
<text x="828.00" y="562.15">专业知识</text>
<text x="821.20" y="601.20">关联知识</text>
<text x="799.80" y="633.30">技术能力</text>
<text x="766.00" y="655.50">业务能力</text>
<text x="699.00" y="669.55">项目计划能力</text>
<text x="603.60" y="655.55">项目跟踪和控制能力</text>
<text x="566.80" y="633.75">风险识别与管控</text>
<text x="569.20" y="601.50">度量及数据分析</text>
<text x="552.00" y="562.30">敏捷项目管理能力</text>
<text x="559.20" y="524.75">成本分析控制能力</text>
<text x="609.80" y="491.40">团队影响力</text>
<text x="609.10" y="463.60">带人的能力<tspan dx="0.7">/</tspan><tspan dx="0.7">知识传</tspan></text>
<text x="618.30" y="475.40">递</text></g><rect x="848.1" y="445.2" width="75.5" height="18.2" fill="#fff" stroke="#000" stroke-width="1.1"/><rect x="867.5" y="452.59999999999997" width="3.6" height="3.2" fill="#8fa4c8" stroke="#111" stroke-width="1.1"/><text x="872.4" y="457.8" font-size="8.1" fill="#555" font-family="Liberation Sans">P3普通等</text>
</svg>
<!-- tab bar -->
<div class="abs" style="left:0;top:757px;width:931px;height:26px;background:linear-gradient(#f1f1f1 0,#f1f1f1 88%,#fafafa 92%,#f3f3f3 100%);border-top:1px solid #c8c8c8"></div>
<svg class="abs" style="left:0;top:757px" width="931" height="26">
 <path d="M22 9 v10 l-7 -5z" fill="#999"/>
 <path d="M38.5 9 v10 l7 -5z" fill="#999"/>
 <path d="M148 13.8 h10 M153 8.8 v10" stroke="#555" stroke-width="2"/>
 <line x1="171.4" y1="0" x2="171.4" y2="26" stroke="#d0d0d0"/>
</svg>
<div class="abs" style="left:61px;top:757px;width:72.3px;height:21.6px;background:#fff;border-radius:0 0 3px 3px;box-shadow:0 1px 1.5px rgba(0,0,0,0.25)"></div>
<div class="abs" style="left:71.8px;top:763.2px;font-size:11.8px;color:#4f9a86;line-height:18px">研发人员</div>
<!-- status bar -->
<div class="abs" style="left:0;top:783px;width:931px;height:23px;background:linear-gradient(#e1e1e1,#d9d9d9);border-top:1px solid #a9a9a9"></div>
<div class="abs" style="left:24.5px;top:786.6px;font-size:11.7px;color:#333;line-height:18px">就绪</div>
<div class="abs" style="left:579.3px;top:784px;width:36.5px;height:22px;background:#a9a9a9"></div>
<svg class="abs" style="left:0;top:783px" width="931" height="23">
 <g fill="#fff">
  <rect x="591" y="5" width="13.5" height="12.5" fill="none" stroke="#fff" stroke-width="1.5"/>
  <path d="M595.5 5 v12.5 M600 5 v12.5 M591 9.2 h13.5 M591 13.3 h13.5" stroke="#fff" stroke-width="1.3"/>
 </g>
 <rect x="626.5" y="5.5" width="13" height="12" fill="none" stroke="#555" stroke-width="1.4"/>
 <path d="M626.5 12.3 h9 v-6.8 M629.8 5.5 v6.8 M632.7 5.5 v6.8" fill="none" stroke="#555" stroke-width="1.2"/>
 <rect x="662.9" y="5.5" width="12.8" height="12" fill="none" stroke="#555" stroke-width="1.4"/>
 <rect x="665.7" y="8" width="7.2" height="7" fill="none" stroke="#555" stroke-width="1"/>
 <path d="M666.8 10 h5 M666.8 11.6 h5 M666.8 13.2 h5" stroke="#555" stroke-width="0.8"/>
 <line x1="704" y1="12" x2="712" y2="12" stroke="#555" stroke-width="1.8"/>
 <line x1="729" y1="11.6" x2="825.5" y2="11.6" stroke="#9c9c9c" stroke-width="3" stroke-linecap="round"/>
 <circle cx="777.4" cy="11.6" r="5.8" fill="#fff" stroke="#bdbdbd" stroke-width="0.8"/>
 <path d="M842.6 12 h8.4 M846.8 7.8 v8.4" stroke="#555" stroke-width="1.8"/>
</svg>
<div class="abs" style="left:875.5px;top:786px;font-size:12.2px;color:#3a3a3a;line-height:18px">100%</div>
<svg class="abs" style="left:0;top:0" width="931" height="806">
 <path d="M0 0 h5 a5 5 0 0 0 -5 5z" fill="#f4f8f5"/>
 <path d="M931 0 h-5 a5 5 0 0 1 5 5z" fill="#f4f8f5"/>
 <path d="M931 806 h-5 a5 5 0 0 0 5 -5z" fill="#f4f4f4"/>
</svg>
</body></html>
